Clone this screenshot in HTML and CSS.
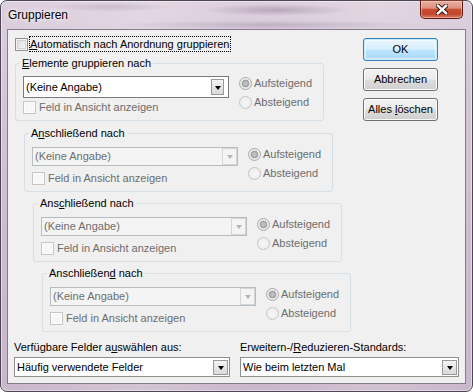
FILE: index.html
```html
<!DOCTYPE html>
<html lang="de">
<head>
<meta charset="utf-8">
<title>Gruppieren</title>
<link rel="stylesheet" href="styles.css">
</head>
<body>
<div class="window">
  <div class="titlebar">
    <span class="title">Gruppieren</span>
    <button class="close" aria-label="Schließen">
      <svg width="12" height="11" viewBox="0 0 12 11">
        <path d="M2 1.8 L10 9.2 M10 1.8 L2 9.2" stroke="#3b1a14" stroke-width="4.4" stroke-linecap="square" fill="none"/>
        <path d="M2 1.8 L10 9.2 M10 1.8 L2 9.2" stroke="#ffffff" stroke-width="2.4" stroke-linecap="square" fill="none"/>
      </svg>
    </button>
  </div>
  <div class="client">
    <div class="upper">
      <div class="left">
        <div class="top-row">
          <span class="cb"></span>
          <span class="focus"><u>A</u>utomatisch nach Anordnung gruppieren</span>
        </div>

        <fieldset class="grp grp-1">
          <legend><u>E</u>lemente gruppieren nach</legend>
          <div class="grp-body">
            <div class="grp-main">
              <div class="combo combo-big"><span class="combo-text">(Keine Angabe)</span><span class="drop"></span></div>
              <div class="chk-row"><span class="cb off"></span><span class="dis">Feld in Ansicht anzeigen</span></div>
            </div>
            <div class="radios">
              <div class="radio-row"><span class="radio on"></span><span class="dis">Aufsteigend</span></div>
              <div class="radio-row"><span class="radio"></span><span class="dis">Absteigend</span></div>
            </div>
          </div>
        </fieldset>

        <fieldset class="grp grp-n grp-2">
          <legend>A<u>n</u>schließend nach</legend>
          <div class="grp-body">
            <div class="grp-main">
              <div class="combo combo-dis"><span class="combo-text">(Keine Angabe)</span><span class="drop"></span></div>
              <div class="chk-row"><span class="cb off"></span><span class="dis">Feld in Ansicht anzeigen</span></div>
            </div>
            <div class="radios">
              <div class="radio-row"><span class="radio on"></span><span class="dis">Aufsteigend</span></div>
              <div class="radio-row"><span class="radio"></span><span class="dis">Absteigend</span></div>
            </div>
          </div>
        </fieldset>

        <fieldset class="grp grp-n grp-3">
          <legend>Ans<u>c</u>hließend nach</legend>
          <div class="grp-body">
            <div class="grp-main">
              <div class="combo combo-dis"><span class="combo-text">(Keine Angabe)</span><span class="drop"></span></div>
              <div class="chk-row"><span class="cb off"></span><span class="dis">Feld in Ansicht anzeigen</span></div>
            </div>
            <div class="radios">
              <div class="radio-row"><span class="radio on"></span><span class="dis">Aufsteigend</span></div>
              <div class="radio-row"><span class="radio"></span><span class="dis">Absteigend</span></div>
            </div>
          </div>
        </fieldset>

        <fieldset class="grp grp-n grp-4">
          <legend>Anschließen<u>d</u> nach</legend>
          <div class="grp-body">
            <div class="grp-main">
              <div class="combo combo-dis"><span class="combo-text">(Keine Angabe)</span><span class="drop"></span></div>
              <div class="chk-row"><span class="cb off"></span><span class="dis">Feld in Ansicht anzeigen</span></div>
            </div>
            <div class="radios">
              <div class="radio-row"><span class="radio on"></span><span class="dis">Aufsteigend</span></div>
              <div class="radio-row"><span class="radio"></span><span class="dis">Absteigend</span></div>
            </div>
          </div>
        </fieldset>
      </div>

      <div class="buttons">
        <button class="btn btn-default">OK</button>
        <button class="btn">Abbrechen</button>
        <button class="btn">Alles <u>l</u>öschen</button>
      </div>
    </div>

    <div class="lower">
      <div class="field">
        <div class="label">Verfügbare Felder a<u>u</u>swählen aus:</div>
        <div class="combo combo-low"><span class="combo-text">Häufig verwendete Felder</span><span class="drop"></span></div>
      </div>
      <div class="field">
        <div class="label">Erweitern-/<u>R</u>eduzieren-Standards:</div>
        <div class="combo combo-low"><span class="combo-text">Wie beim letzten Mal</span><span class="drop"></span></div>
      </div>
    </div>
  </div>
</div>
</body>
</html>
```

FILE: styles.css
```css
* { box-sizing: border-box; }
html, body { margin: 0; padding: 0; }
body {
  width: 473px;
  height: 392px;
  overflow: hidden;
  background: #ffffff;
  font: 11px/13px "Liberation Sans", Arial, sans-serif;
  color: #000;
}
u { text-decoration: underline; text-underline-offset: 1px; }

.window {
  width: 473px;
  height: 392px;
  border: 1px solid #4d4654;
  border-radius: 7px;
  padding: 0 6px 7px 6px;
  display: flex;
  flex-direction: column;
  background:
    radial-gradient(ellipse 75px 6px at 275px 9px, rgba(95,75,105,.30), rgba(95,75,105,0)),
    radial-gradient(ellipse 60px 5px at 110px 6px, rgba(95,75,105,.18), rgba(95,75,105,0)),
    radial-gradient(ellipse 160px 5px at 270px 24px, rgba(95,75,105,.22), rgba(95,75,105,0)),
    linear-gradient(90deg, rgba(255,255,255,0) 0%, rgba(255,255,255,.18) 30%, rgba(255,255,255,0) 55%, rgba(255,255,255,.15) 80%, rgba(255,255,255,0) 100%),
    linear-gradient(180deg, #dccfdd 0%, #d5c6d7 25%, #cdbccf 60%, #c9b7cb 100%);
  box-shadow: inset 0 0 0 1px rgba(255,255,255,.45);
}

.titlebar {
  height: 28px;
  display: flex;
  align-items: flex-start;
  padding-left: 1px;
}
.title {
  font-size: 12px;
  line-height: 15px;
  margin-top: 7px;
  color: #000;
  text-shadow: 0 0 6px rgba(255,255,255,.95), 0 0 3px rgba(255,255,255,.9);
}
.close {
  margin: -1px 3px 0 auto;
  width: 43px;
  height: 19px;
  padding: 0;
  border: 1px solid #5a1d12;
  border-top-color: #7a3b30;
  border-radius: 0 0 5px 5px;
  background: linear-gradient(180deg, #eab0a2 0%, #df8f7d 42%, #c84d33 50%, #c2452b 75%, #dd7a5f 100%);
  box-shadow: inset 0 0 0 1px rgba(255,220,210,.45);
  display: flex;
  align-items: center;
  justify-content: center;
}
.close svg { display: block; }

.client {
  flex: 1;
  border: 1px solid #857b8b;
  background: #f0f0f0;
  padding: 6px 6px 0 6px;
  display: flex;
  flex-direction: column;
}

.upper { display: flex; }
.left { flex: 1; }

.buttons {
  width: 75px;
  margin: 2px 21px 0 0;
  display: flex;
  flex-direction: column;
  gap: 7px;
}
.btn {
  height: 23px;
  width: 75px;
  padding: 0;
  font: 11px/13px "Liberation Sans", Arial, sans-serif;
  color: #000;
  border: 1px solid #707070;
  border-radius: 3px;
  background: linear-gradient(180deg, #f2f2f2 0%, #ebebeb 48%, #dddddd 52%, #cfcfcf 100%);
  box-shadow: inset 0 0 0 1px #fbfbfb;
}
.btn-default {
  border-color: #3c7fb1;
  background: linear-gradient(180deg, #eaf6fd 0%, #d9f0fc 48%, #bee6fd 52%, #a7d9f5 100%);
  box-shadow: inset 0 0 0 1px #c6ecfa, inset 0 0 0 2px rgba(255,255,255,.5);
}

/* checkbox */
.cb {
  width: 13px;
  height: 13px;
  flex: none;
  border: 1px solid #8e8f8f;
  background: linear-gradient(135deg, #d6d6d6 0%, #ececec 60%, #fafafa 100%);
  box-shadow: inset 0 0 0 1px #f4f4f4, inset 0 0 0 2px #d0d0d0;
}
.cb.off {
  border-color: #c6c6c6;
  background: #f7f7f7;
  box-shadow: inset 0 0 0 1px #fcfcfc;
}

.top-row {
  height: 16px;
  display: flex;
  align-items: center;
  margin-left: 1px;
}
.top-row .cb { margin-right: 1px; }
.focus {
  border: 1px dotted #000;
  line-height: 14px;
  padding: 0 1px 0 0;
}

/* groups */
.grp {
  margin: 0;
  padding: 0 7px;
  min-width: 0;
  width: 309px;
  border: 1px solid #d5dfe5;
  border-radius: 3px;
}
.grp legend {
  padding: 0 2px;
  margin-left: -3px;
  line-height: 13px;
}
.grp-1 { margin: 5px 0 0 1px; padding-top: 6px; }
.grp-n { padding-top: 7px; }
.grp-body { display: flex; height: 44px; }
.grp-2 { margin: 6px 0 0 10px; }
.grp-3 { margin: 5px 0 0 19px; }
.grp-4 { margin: 5px 0 0 28px; }

.grp-main { width: 206px; }

.combo {
  display: flex;
  align-items: center;
  border: 1px solid #828790;
  background: #fff;
  padding-left: 2px;
}
.combo-text { flex: 1; white-space: nowrap; }
.combo-big { height: 22px; border-color: #7a7a7a; }
.combo-low { height: 20px; border-color: #8f8f8f; }
.combo-dis {
  height: 19px;
  border-color: #b5bcc2;
  background: #f4f4f4;
  color: #6d6d6d;
}

.drop {
  width: 15px;
  height: 15px;
  margin-right: 1px;
  flex: none;
  border: 1px solid #9a9a9a;
  background: linear-gradient(180deg, #f4f4f4 0%, #e6e6e6 50%, #d9d9d9 100%);
  display: flex;
  align-items: center;
  justify-content: center;
}
.combo-big .drop { height: 16px; margin-right: 4px; width: 13px; }
.drop::after {
  content: "";
  width: 0;
  height: 0;
  border-left: 3.5px solid transparent;
  border-right: 3.5px solid transparent;
  border-top: 4px solid #000;
  margin-top: 1px;
}
.combo-dis .drop {
  height: 17px;
  margin-right: 0;
  border-color: #d4d7da;
  background: #f4f4f4;
}
.combo-dis .drop::after { border-top-color: #b4b4b4; }

.chk-row {
  height: 15px;
  display: flex;
  align-items: center;
  gap: 3px;
}
.grp-1 .chk-row { margin-top: 2px; }
.grp-n .chk-row { margin-top: 5px; }
.dis { color: #6d6d6d; }

.radios { margin-left: 10px; margin-top: -2px; }
.radio-row {
  height: 19px;
  display: flex;
  align-items: center;
  white-space: nowrap;
}
.radio {
  width: 13px;
  height: 13px;
  margin-right: 2px;
  border-radius: 50%;
  border: 1px solid #c4c4c4;
  background: radial-gradient(circle at 50% 50%, #f6f6f6 0%, #ebebeb 100%);
  flex: none;
}
.radio.on {
  border-color: #a9a9a9;
  background: radial-gradient(circle at 50% 50%, #c9c9c9 0px, #b0b0b0 2.5px, #9c9c9c 3.5px, #ececec 4.2px, #f2f2f2 100%);
}

/* lower */
.lower {
  margin-top: 9px;
  display: grid;
  grid-template-columns: 216px 219px;
  column-gap: 10px;
}
.label { line-height: 13px; margin-bottom: 3px; }
```
